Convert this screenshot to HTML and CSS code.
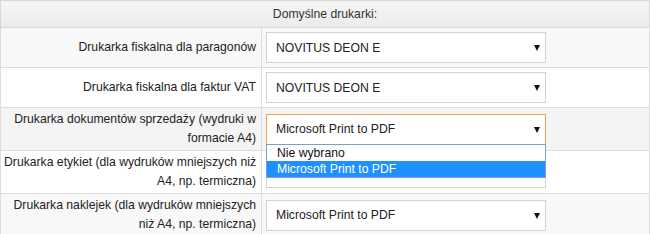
FILE: index.html
```html
<!DOCTYPE html>
<html lang="pl">
<head>
    <meta charset="UTF-8">
    <title>Domyślne drukarki</title>
    <link rel="stylesheet" href="styles.css">
</head>
<body>
    <table class="printers">
        <colgroup>
            <col class="col-label">
            <col>
        </colgroup>
        <thead>
            <tr><th colspan="2">Domyślne drukarki:</th></tr>
        </thead>
        <tbody>
            <tr class="odd">
                <td class="label">Drukarka fiskalna dla paragonów</td>
                <td class="field">
                    <div class="select-wrap">
                        <select><option>NOVITUS DEON E</option></select>
                    </div>
                </td>
            </tr>
            <tr>
                <td class="label">Drukarka fiskalna dla faktur VAT</td>
                <td class="field">
                    <div class="select-wrap">
                        <select><option>NOVITUS DEON E</option></select>
                    </div>
                </td>
            </tr>
            <tr class="odd hover">
                <td class="label">Drukarka dokumentów sprzedaży (wydruki w formacie A4)</td>
                <td class="field">
                    <div class="select-wrap open">
                        <select><option>Microsoft Print to PDF</option></select>
                        <ul class="dropdown">
                            <li>Nie wybrano</li>
                            <li class="selected">Microsoft Print to PDF</li>
                        </ul>
                    </div>
                </td>
            </tr>
            <tr>
                <td class="label">Drukarka etykiet (dla wydruków mniejszych niż A4, np. termiczna)</td>
                <td class="field">
                    <div class="select-wrap">
                        <select><option>Microsoft Print to PDF</option></select>
                    </div>
                </td>
            </tr>
            <tr class="odd">
                <td class="label">Drukarka naklejek (dla wydruków mniejszych niż A4, np. termiczna)</td>
                <td class="field">
                    <div class="select-wrap">
                        <select><option>Microsoft Print to PDF</option></select>
                    </div>
                </td>
            </tr>
        </tbody>
    </table>
</body>
</html>
```

FILE: styles.css
```css
* {
    margin: 0;
    padding: 0;
    box-sizing: border-box;
}
body {
    background: #fff;
    font-family: "Liberation Sans", Arial, sans-serif;
    font-size: 12.2px;
    color: #222;
}
.printers {
    width: 650px;
    border-collapse: collapse;
    table-layout: fixed;
    border: 1px solid #ddd;
}
.col-label {
    width: 261px;
}
.printers th {
    height: 27px;
    font-weight: normal;
    color: #333;
    text-align: center;
    background: linear-gradient(180deg, #f6f6f6 0%, #ebebeb 100%);
    border: 1px solid #d9d9d9;
}
.printers td {
    border: 1px solid #ddd;
    vertical-align: middle;
    background: #fff;
}
.printers tr.odd td {
    background: #f8f8f8;
}
.printers tr.hover td {
    background: #f4f4f4;
}
.label {
    text-align: right;
    line-height: 19px;
    padding: 2px 5px 2px 1px;
}
.field {
    padding: 2px 4px;
}
.select-wrap {
    position: relative;
    width: 280px;
    margin: 2px 0;
}
.select-wrap::after {
    content: '';
    position: absolute;
    right: 6px;
    top: 13px;
    border-left: 3px solid transparent;
    border-right: 3px solid transparent;
    border-top: 6px solid #111;
    pointer-events: none;
}
.select-wrap select {
    display: block;
    width: 280px;
    height: 31px;
    padding: 0 20px 0 9px;
    border: 1px solid #d3d3d3;
    background: #fff;
    font-family: inherit;
    font-size: 12.2px;
    color: #222;
    appearance: none;
    -webkit-appearance: none;
    outline: none;
}
.select-wrap.open select {
    border-color: #f0a255;
}
.dropdown {
    position: absolute;
    left: 0;
    top: 30px;
    width: 280px;
    list-style: none;
    background: #fff;
    border: 1px solid #7d9dd3;
    z-index: 10;
}
.dropdown li {
    height: 16px;
    line-height: 16px;
    padding-left: 10px;
    color: #111;
}
.dropdown li.selected {
    background: #1e90ff;
    color: #fff;
}
```
